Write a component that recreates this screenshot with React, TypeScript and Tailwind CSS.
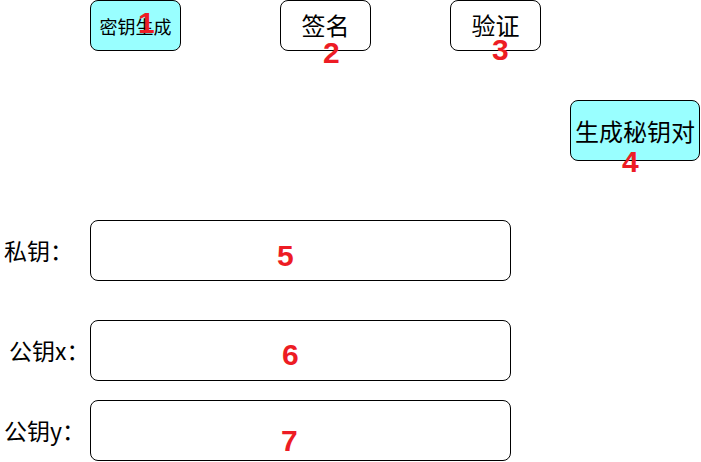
import React from "react";

const font = { fontFamily: '"Noto Sans CJK SC", "Noto Sans", sans-serif' };

function Num({ n, left, top }: { n: string; left: number; top: number }) {
  return (
    <span
      className="absolute text-[30px] leading-none font-bold text-[#ed1c24] [font-family:'Liberation_Sans',Arial,sans-serif]"
      style={{ left, top }}
    >
      {n}
    </span>
  );
}

function Field({ label, pl }: { label: string; pl: string }) {
  return (
    <div className="flex items-center">
      <div className={`w-[90px] text-[23px] leading-none text-black ${pl}`}>{label}</div>
      <div className="w-[421px] h-[61px] border border-black rounded-[8px] bg-white" />
    </div>
  );
}

export default function App() {
  return (
    <div className="relative w-[701px] h-[462px] bg-white overflow-hidden" style={font}>
      <div className="flex pl-[90px]">
        <div className="w-[91px] h-[51px] border border-black rounded-[8px] bg-[#99ffff] flex items-center justify-center text-[18px] leading-none text-black">
          密钥生成
        </div>
        <div className="ml-[99px] w-[91px] h-[51px] border border-black rounded-[8px] bg-white flex items-center justify-center pb-[2px] text-[24px] leading-none text-black">
          签名
        </div>
        <div className="ml-[79px] w-[91px] h-[51px] border border-black rounded-[8px] bg-white flex items-center justify-center pb-[2px] text-[24px] leading-none text-black">
          验证
        </div>
      </div>
      <div className="flex pl-[570px] mt-[49px]">
        <div className="w-[130px] h-[61px] border border-black rounded-[8px] bg-[#99ffff] flex items-center justify-center text-[24px] leading-none text-black">
          生成秘钥对
        </div>
      </div>
      <div className="flex flex-col mt-[59px]">
        <Field label="私钥：" pl="pl-[4px]" />
        <div className="mt-[39px]">
          <Field label="公钥x：" pl="pl-[9px]" />
        </div>
        <div className="mt-[19px]">
          <Field label="公钥y：" pl="pl-[4px]" />
        </div>
      </div>
      <Num n="1" left={138} top={8} />
      <Num n="2" left={323} top={38} />
      <Num n="3" left={492} top={35} />
      <Num n="4" left={622} top={147} />
      <Num n="5" left={277} top={241} />
      <Num n="6" left={282} top={340} />
      <Num n="7" left={281} top={426} />
    </div>
  );
}
